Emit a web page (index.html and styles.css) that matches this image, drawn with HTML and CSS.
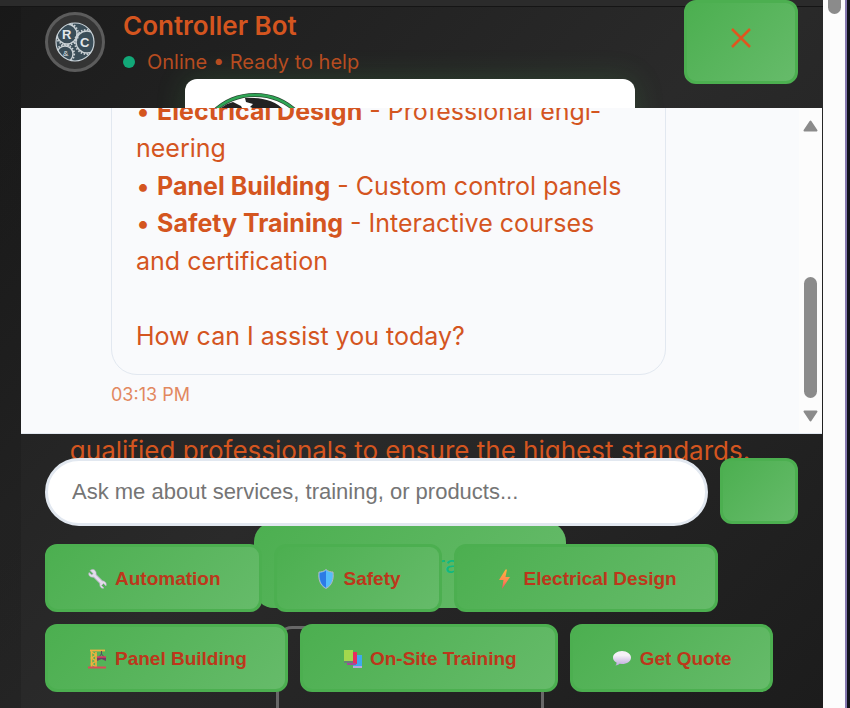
FILE: index.html
```html
<!DOCTYPE html>
<html lang="en">
<head>
<meta charset="utf-8">
<title>Controller Bot</title>
<link rel="stylesheet" href="styles.css">
</head>
<body>
<div class="stage">
  <div class="backdrop">
    <div class="nav-strip"></div>
    <div class="brand-card">
      <svg class="brand-logo" width="128" height="128" viewBox="0 0 128 128" aria-hidden="true">
        <circle cx="64" cy="64" r="60" fill="#fff" stroke="#2b4a34" stroke-width="4"/>
        <circle cx="64" cy="64" r="60" fill="none" stroke="#2fa555" stroke-width="2.500"/>
        <path d="M20 24 L30 17 L36 13 L42 11 L50 15 L52 19 L50 26 L20 32Z" fill="#222"/>
        <path d="M54 7 L62 7 C74 7 86 11 94 20 L94 30 H66 L64 18 L59 16 L62 13 L55 11Z" fill="#222"/>
      </svg>
    </div>
    <p class="backdrop-text">qualified professionals to ensure the highest standards.</p>
    <div class="cta">ra</div>
    <div class="outline-card"></div>
  </div>

  <main class="chat">
    <header class="chat-header">
      <div class="avatar">
        <svg width="40" height="40" viewBox="0 0 40 40" aria-hidden="true">
          <defs><clipPath id="disc"><circle cx="20" cy="20" r="19"/></clipPath></defs>
          <circle cx="20" cy="20" r="19" fill="#3a4d58"/>
          <g clip-path="url(#disc)" fill="none" stroke="#c9d0d4">
            <circle cx="12" cy="12" r="10" stroke-width="1.400"/>
            <circle cx="12" cy="12" r="11.200" stroke-width="1.800" stroke-dasharray="1.500 1.500"/>
            <circle cx="32" cy="20" r="11" stroke-width="1.400"/>
            <circle cx="32" cy="20" r="12.200" stroke-width="1.800" stroke-dasharray="1.500 1.500"/>
            <circle cx="10" cy="32" r="8" stroke-width="1.400"/>
            <circle cx="10" cy="32" r="9.200" stroke-width="1.800" stroke-dasharray="1.500 1.500"/>
          </g>
          <circle cx="20" cy="20" r="19" fill="none" stroke="#c9d3d9" stroke-width="1.200"/>
          <text x="7" y="17" class="logo-letter">R</text>
          <text x="25" y="25" class="logo-letter">C</text>
          <text x="8" y="34" class="logo-amp">&amp;</text>
        </svg>
      </div>
      <div class="identity">
        <h1>Controller Bot</h1>
        <p class="status"><span class="dot"></span>Online • Ready to help</p>
      </div>
      <button class="green close" type="button" aria-label="Close">
        <svg width="22" height="22" viewBox="0 0 22 22" aria-hidden="true"><path d="M2 2 L20 20 M20 2 L2 20" stroke="#e0561f" stroke-width="2.500" fill="none"/></svg>
      </button>
    </header>

    <section class="messages">
      <div class="thread">
        <div class="bubble"><p>• <strong>Electrical Design</strong> - Professional engi&shy;neering<br>• <strong>Panel Building</strong> - Custom control panels<br>• <strong>Safety Training</strong> - Interactive courses and certification</p><p class="question">How can I assist you today?</p></div>
        <time class="time">03:13 PM</time>
      </div>
      <div class="scrollbar" aria-hidden="true">
        <svg width="15" height="12" viewBox="0 0 15 12"><path d="M7.500 1.500 L13.500 10.500 H1.500Z" fill="#8b8b8b" stroke="#8b8b8b" stroke-width="2" stroke-linejoin="round"/></svg>
        <span class="thumb"></span>
        <svg width="15" height="12" viewBox="0 0 15 12"><path d="M7.500 10.500 L13.500 1.500 H1.500Z" fill="#8b8b8b" stroke="#8b8b8b" stroke-width="2" stroke-linejoin="round"/></svg>
      </div>
    </section>

    <footer class="composer">
      <form class="entry">
        <input type="text" aria-label="Message" placeholder="Ask me about services, training, or products...">
        <button class="green send" type="button" aria-label="Send"></button>
      </form>
      <div class="quick">
        <button class="green" type="button">
          <svg width="24" height="24" viewBox="0 0 24 24" aria-hidden="true"><path d="M7 7 L16 16" stroke="#d8cfe2" stroke-width="4"/><path d="M4 3.500 L7 6.500 L6 8 L3 5.500 C2 8 4 11 8 10 L14 16 C13 20 16 22 18 21 L15.500 18.500 L17.500 16.500 L20 19 C21 16 19 13.500 16 14 L10 8 C11 4 8 2 6 2.500Z" fill="#e4ddeb" stroke="#b9adc9" stroke-width=".6"/></svg>
          Automation</button>
        <button class="green" type="button">
          <svg width="24" height="24" viewBox="0 0 24 24" aria-hidden="true"><path d="M11 2.500 C13 4.500 16 5 18 5 C19 12 17 18.500 11 21.500 C5 18.500 3 12 4 5 C6 5 9 4.500 11 2.500Z" fill="#54bdfb" stroke="#b3b4c0" stroke-width="1"/><path d="M11 3.500 C9 5.500 6.500 5.700 4.800 5.700 C4 12 6 18 11 20.700Z" fill="#2c7be5"/></svg>
          Safety</button>
        <button class="green" type="button">
          <svg width="24" height="24" viewBox="0 0 24 24" aria-hidden="true"><defs><linearGradient id="bolt" x1="0" y1="0" x2="0" y2="1"><stop offset="0" stop-color="#ffb23e"/><stop offset=".6" stop-color="#ff8650"/><stop offset="1" stop-color="#f24a62"/></linearGradient></defs><path d="M10.500 2.500 L4 13 H8.500 L7 22 L15 10 H10.500 L12 2.500Z" fill="url(#bolt)"/></svg>
          Electrical Design</button>
        <button class="green" type="button">
          <svg width="24" height="24" viewBox="0 0 24 24" aria-hidden="true"><path d="M5.500 3 V20 M10 5 V20" stroke="#efb13f" stroke-width="1.600"/><path d="M5.500 5 L10 8 L5.500 11 L10 14 L5.500 17 L10 20" fill="none" stroke="#efb13f" stroke-width="1.500"/><path d="M4 3.500 H19" stroke="#efb13f" stroke-width="1.800"/><path d="M15.500 4 V7 L12 11 M15.500 7 L19 11" fill="none" stroke="#554b62" stroke-width="1"/><path d="M11 10 H20 V14 L15.500 12 L11 14Z" fill="#713d68"/><path d="M11 10 H20" stroke="#dc3e62" stroke-width="1.500"/><path d="M2 20.500 H20" stroke="#d84c58" stroke-width="2"/></svg>
          Panel Building</button>
        <button class="green" type="button">
          <svg width="24" height="24" viewBox="0 0 24 24" aria-hidden="true"><path d="M14 8 H21 V20 H12Z" fill="#3ea9ef"/><path d="M12 19 H21 V21 H12Z" fill="#b8a7dc"/><path d="M8 5 H16 V17 H8Z" fill="#e92c5d"/><path d="M6 16 H15 V18 H6Z" fill="#a34c99"/><path d="M3 3 H12 V14 H3Z" fill="#a4d84d"/><path d="M3 14 H12 V16 H3Z" fill="#668277"/></svg>
          On-Site Training</button>
        <button class="green" type="button">
          <svg width="24" height="24" viewBox="0 0 24 24" aria-hidden="true"><defs><linearGradient id="speech" x1="0" y1="0" x2="0" y2="1"><stop offset=".3" stop-color="#f5f1f7"/><stop offset="1" stop-color="#bda9dc"/></linearGradient></defs><path d="M11 4 C16 4 20 7 20 10.500 C20 14.500 16 17 11 17 L8.500 16.800 C7.500 18 6 18.500 4.500 18.500 C5.500 17.500 5.600 16.500 5.500 15.500 C3 14.300 2 12.500 2 10.500 C2 7 6 4 11 4Z" fill="url(#speech)"/></svg>
          Get Quote</button>
      </div>
    </footer>
  </main>
</div>
<div class="page-scroll" aria-hidden="true"><span></span></div>
<div class="window-edge"></div>
</body>
</html>
```

FILE: styles.css
```css
* { box-sizing: border-box; }

body {
  margin: 0;
  min-height: 100vh;
  display: flex;
  font-family: Inter, "Liberation Sans", sans-serif;
  color: #d4551f;
  background: #1a1a1a;
}

h1, p { margin: 0; }

.stage {
  flex: 1;
  min-width: 0;
  display: grid;
  height: 100vh;
  overflow: hidden;
  background: linear-gradient(135deg, #1b1b1b 0%, #2a2a2a 50%, #1c1c1c 100%);
}

.backdrop, .chat { grid-area: 1 / 1; min-width: 0; min-height: 0; }

.backdrop {
  display: flex;
  flex-direction: column;
  align-items: center;
  overflow: hidden;
  padding-right: 3px;
  background: linear-gradient(90deg, rgba(0, 0, 0, 0.12) 21px, transparent 21px);
}

.nav-strip {
  flex: none;
  align-self: stretch;
  height: 7px;
  margin-right: -3px;
  background: #2b2b2b;
  border-bottom: 1px solid #151515;
}

.brand-card {
  flex: none;
  width: 450px;
  height: 320px;
  margin-top: 72px;
  padding: 12px 6px;
  border-radius: 12px;
  background: #fff;
  box-shadow: 0 0 30px rgba(76, 175, 80, 0.2);
}

.backdrop-text {
  margin-top: 32px;
  font-size: 26px;
  line-height: 40px;
  white-space: nowrap;
}

.cta {
  flex: none;
  width: 312px;
  height: 86px;
  margin-top: 51px;
  padding-left: 182px;
  border-radius: 20px;
  font-size: 24px;
  line-height: 86px;
  color: #10b981;
  background: linear-gradient(135deg, #4caf50, #66bb6a);
}

.outline-card {
  flex: none;
  width: 268px;
  height: 160px;
  margin-top: 18px;
  border: 3px solid #686868;
  border-radius: 16px;
}

.chat {
  z-index: 1;
  display: flex;
  flex-direction: column;
  margin: 0 1px 0 21px;
}

.chat-header {
  display: flex;
  align-items: center;
  padding: 0 24px 24px;
}

.avatar {
  display: grid;
  place-items: center;
  width: 60px;
  height: 60px;
  border: 3px solid #5c5c5c;
  border-radius: 50%;
  background: #343434;
}

.logo-letter { font: bold 13px "Liberation Sans", sans-serif; fill: #e2e6e8; }
.logo-amp { font: 8px "Liberation Sans", sans-serif; fill: #e2e6e8; }

.identity { flex: 1; padding: 4px 0 0 18px; }

h1 {
  font-size: 26px;
  line-height: 36px;
  font-weight: 600;
}

.status {
  display: flex;
  align-items: center;
  gap: 12px;
  font-size: 20px;
  line-height: 36px;
  color: #b64c20;
}

.dot {
  width: 12px;
  height: 12px;
  border-radius: 50%;
  background: #12a878;
}

.green {
  display: flex;
  align-items: center;
  justify-content: center;
  gap: 5px;
  padding: 2px 38px 0;
  border: 3px solid #4caf50;
  border-radius: 12px;
  background: linear-gradient(135deg, #4caf50, #66bb6a);
  font: bold 19px "Liberation Sans", sans-serif;
  color: #bd371b;
  white-space: nowrap;
}

.close {
  width: 114px;
  height: 84px;
  padding: 0 0 8px;
}

.messages {
  flex: 1;
  min-height: 0;
  display: flex;
  overflow: hidden;
  background: #f9fafc;
  border-bottom: 1px solid #e2e8f0;
}

.thread {
  flex: 1;
  display: flex;
  flex-direction: column;
  justify-content: flex-end;
  align-items: flex-start;
  padding: 0 24px 26px 90px;
}

.bubble {
  flex: none;
  max-width: 555px;
  padding: 19px 24px;
  border: 1px solid #e2e8f0;
  border-radius: 26px;
  font-size: 25px;
  line-height: 1.5;
}

.bubble strong { font-weight: 700; }
.question { padding-top: 1.5em; }

.time {
  margin-top: 8px;
  font-size: 18px;
  line-height: 24px;
  color: #e2885f;
}

.scrollbar {
  width: 23px;
  display: flex;
  flex-direction: column;
  align-items: center;
  gap: 12px;
  padding: 12px 0 11px;
  background: #fcfcfc;
}

.thumb {
  width: 13px;
  height: 121px;
  margin-top: auto;
  border-radius: 7px;
  background: #8b8b8b;
}

.composer {
  display: flex;
  flex-direction: column;
  gap: 18px;
  padding: 24px 24px 16px;
}

.entry { display: flex; gap: 12px; }

.entry input {
  flex: 1;
  min-width: 0;
  height: 68px;
  padding: 0 24px;
  border: 3px solid #e2e8f0;
  border-radius: 34px;
  background: #fff;
  font: 22px "Liberation Sans", sans-serif;
}

.entry input::placeholder { color: #757575; }

.send { width: 78px; height: 66px; padding: 0; }

.quick { display: flex; flex-wrap: wrap; gap: 12px; }
.quick .green { height: 68px; }

.page-scroll {
  width: 22px;
  display: flex;
  justify-content: center;
  align-items: flex-start;
  background: #fcfcfc;
}

.page-scroll span {
  width: 13px;
  height: 14px;
  border-radius: 0 0 7px 7px;
  background: #8b8b8b;
}

.window-edge {
  width: 5px;
  border-left: 2px solid #8478b0;
  background: #12131c;
}
```
